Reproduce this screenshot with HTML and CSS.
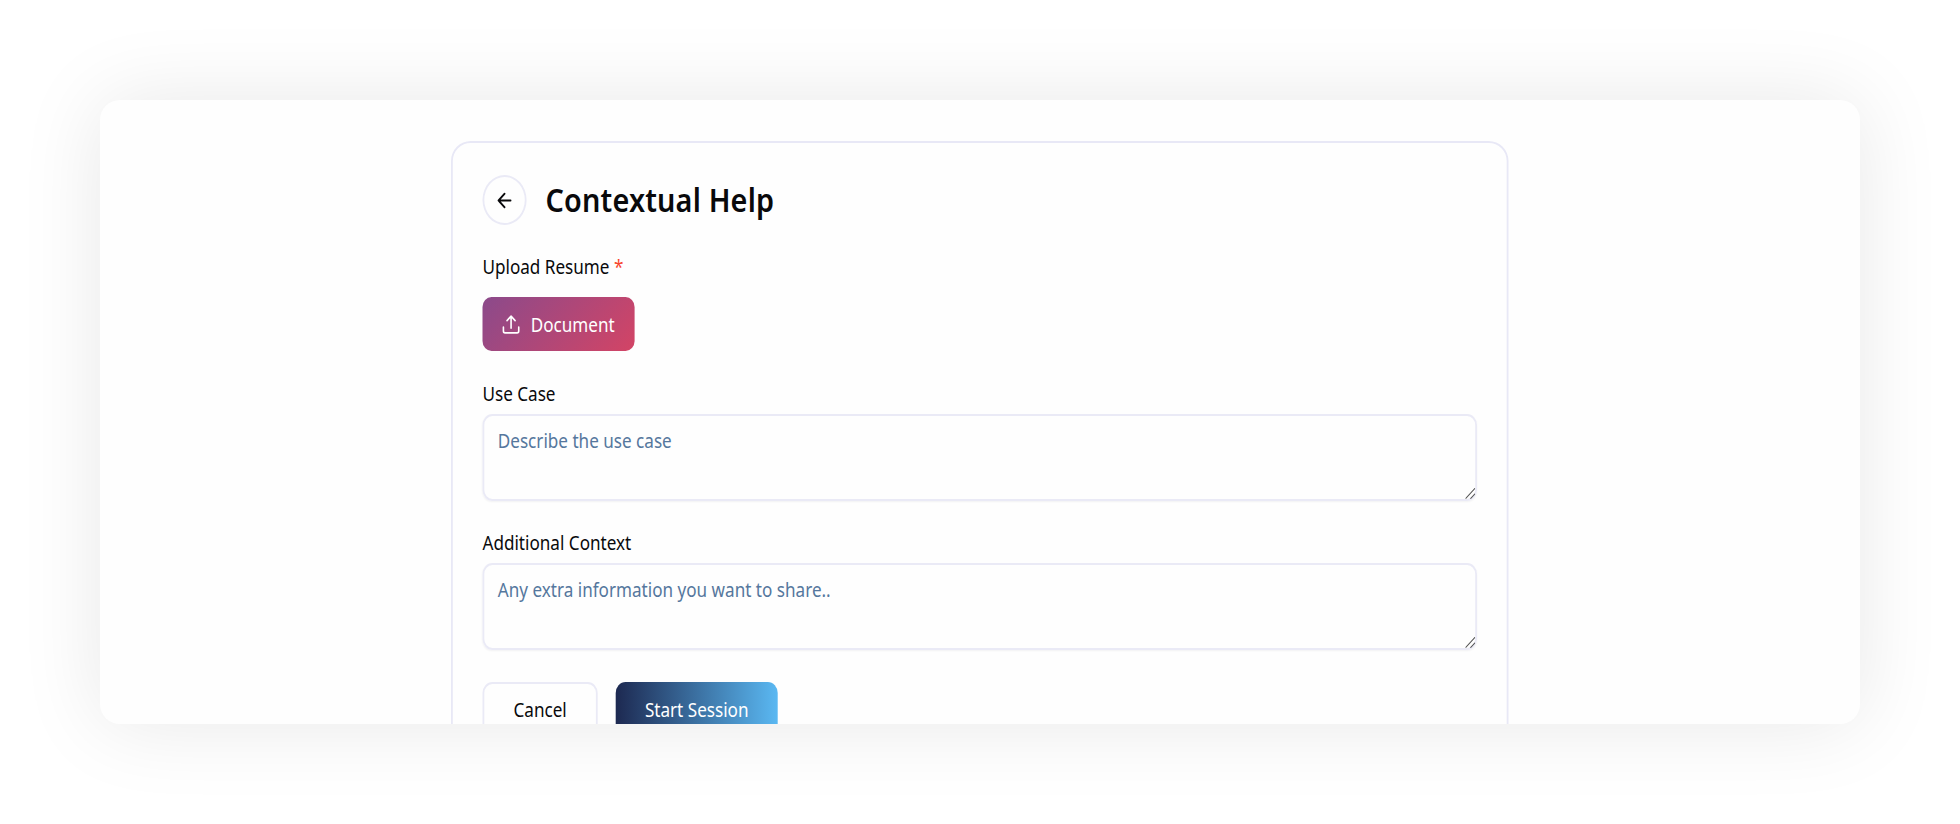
FILE: index.html
```html
<!DOCTYPE html>
<html lang="en">
<head>
    <meta charset="UTF-8">
    <meta name="viewport" content="width=device-width, initial-scale=1.0">
    <title>Contextual Help</title>
    <link rel="stylesheet" href="styles.css">
</head>
<body>

    <main class="window">
        <form class="card">
            <div class="card-header">
                <button type="button" class="back-btn" aria-label="Back">
                    <svg class="back-icon" viewBox="0 0 24 24" preserveAspectRatio="none">
                        <path d="M12 19l-7-7 7-7M19 12H5"/>
                    </svg>
                </button>
                <h1>Contextual Help</h1>
            </div>

            <div class="upload">
                <span class="label">Upload Resume <span class="required">*</span></span>
                <button type="button" class="upload-btn">
                    <svg class="upload-icon" viewBox="0 0 24 24" preserveAspectRatio="none">
                        <path d="M2.5 15v4.5a2 2 0 0 0 2 2h15a2 2 0 0 0 2-2V15M17 7.5l-5-5-5 5M12 2.5V16"/>
                    </svg>
                    Document
                </button>
            </div>

            <div class="field">
                <label class="label" for="use-case">Use Case</label>
                <textarea id="use-case" placeholder="Describe the use case"></textarea>
                <svg class="grip" viewBox="0 0 10 10"><path d="M0.5 9.5l9-9M5.5 9.5l4-4"/></svg>
            </div>

            <div class="field">
                <label class="label" for="context">Additional Context</label>
                <textarea id="context" placeholder="Any extra information you want to share.."></textarea>
                <svg class="grip" viewBox="0 0 10 10"><path d="M0.5 9.5l9-9M5.5 9.5l4-4"/></svg>
            </div>

            <div class="actions">
                <button type="button" class="cancel-btn">Cancel</button>
                <button type="button" class="start-btn">Start Session</button>
            </div>
        </form>
    </main>

</body>
</html>
```
FILE: styles.css
```css
* {
    box-sizing: border-box;
}
body {
    margin: 0;
    padding: 100px;
    height: 824px;
    overflow: hidden;
    background-color: #ffffff;
    color: #09090b;
    font-family: "Noto Sans", sans-serif;
}
.window {
    height: 624px;
    padding: 41px 0 0 351px;
    overflow: hidden;
    background-color: #fefefe;
    border-radius: 20px;
    box-shadow: 0 0 84px rgba(0, 0, 0, 0.095);
}
/* condensed horizontally, so widths inside are before scaling */
.card {
    width: 1175px;
    height: 660px;
    padding: 32px 33px;
    border: 2px solid #e8e8f6;
    border-radius: 22px 22px 0 0 / 20px 20px 0 0;
    transform: scaleX(0.9);
    transform-origin: left top;
}
button, textarea {
    font-family: inherit;
    font-size: 19px;
}
.card-header {
    display: flex;
    align-items: center;
    gap: 21px;
    height: 50px;
}
.back-btn {
    display: flex;
    align-items: center;
    justify-content: center;
    width: 49px;
    height: 50px;
    padding: 0;
    border: 2px solid #eaeaf6;
    border-radius: 50%;
    background: transparent;
    color: #09090b;
}
.back-icon {
    width: 23px;
    height: 23px;
}
.upload-icon {
    width: 21.5px;
    height: 21px;
}
svg {
    fill: none;
    stroke: currentColor;
    stroke-width: 2;
    stroke-linecap: round;
    stroke-linejoin: round;
}
h1 {
    margin: 0;
    font-size: 32px;
    font-weight: 600;
    line-height: 50px;
    letter-spacing: 0.2px;
}
.label {
    font-size: 19px;
    line-height: 26px;
}
.required {
    color: #f8452c;
}
.upload {
    display: flex;
    flex-direction: column;
    align-items: flex-start;
    gap: 17px;
    margin-top: 29px;
}
.upload-btn {
    display: flex;
    align-items: center;
    gap: 11px;
    width: 169px;
    height: 54px;
    padding: 1px 0 0 21px;
    border: none;
    border-radius: 10px;
    background: linear-gradient(135deg, #8b4a8b, #d34465);
    color: #ffffff;
}
.field {
    position: relative;
    display: flex;
    flex-direction: column;
    gap: 7px;
    margin-top: 30px;
}
.field + .field {
    margin-top: 29px;
}
textarea {
    width: 100%;
    height: 87px;
    padding: 11px 15px;
    border: 2px solid #eaeaf6;
    border-radius: 11px;
    background: transparent;
    box-shadow: 0 1px 2px rgba(0, 0, 40, 0.05);
    line-height: 28px;
    resize: none;
}
textarea::placeholder {
    color: #55779d;
}
.grip {
    position: absolute;
    right: 2px;
    bottom: 2px;
    width: 11px;
    height: 11px;
    stroke: #555555;
    stroke-width: 1;
    pointer-events: none;
}
.actions {
    display: flex;
    gap: 20px;
    margin-top: 32px;
}
.cancel-btn, .start-btn {
    height: 56px;
    padding: 0;
    border-radius: 11px;
}
.cancel-btn {
    width: 128px;
    border: 2px solid #eaeaf6;
    background: transparent;
    color: #09090b;
}
.start-btn {
    width: 180px;
    border: none;
    background: linear-gradient(90deg, #1d2951, #5ab8f2);
    color: #ffffff;
}
```
